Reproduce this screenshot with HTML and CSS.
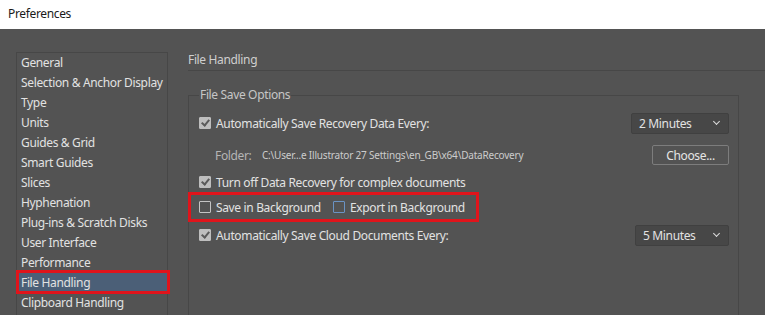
FILE: index.html
```html
<!DOCTYPE html>
<html lang="en">
<head>
    <meta charset="UTF-8">
    <meta name="viewport" content="width=device-width, initial-scale=1.0">
    <title>Preferences</title>
    <link rel="stylesheet" href="styles.css">
</head>
<body>
<div class="titleBar">Preferences</div>
<div class="main">
    <ul class="sideList">
        <li>General</li>
        <li>Selection &amp; Anchor Display</li>
        <li>Type</li>
        <li>Units</li>
        <li>Guides &amp; Grid</li>
        <li>Smart Guides</li>
        <li>Slices</li>
        <li>Hyphenation</li>
        <li>Plug-ins &amp; Scratch Disks</li>
        <li>User Interface</li>
        <li>Performance</li>
        <li class="selected">File Handling</li>
        <li>Clipboard Handling</li>
    </ul>
    <div class="content">
        <div class="pageTitle">File Handling</div>
        <fieldset class="group">
            <legend>File Save Options</legend>
            <div class="row rowFirst">
                <span class="check checked"></span>
                <span class="label">Automatically Save Recovery Data Every:</span>
                <div class="dropdown wide">2 Minutes<span class="chevron"></span></div>
            </div>
            <div class="row rowFolder">
                <span class="folderLabel">Folder:</span>
                <span class="path">C:\User...e Illustrator 27 Settings\en_GB\x64\DataRecovery</span>
                <button class="chooseButton">Choose...</button>
            </div>
            <div class="row rowThird">
                <span class="check checked"></span>
                <span class="label">Turn off Data Recovery for complex documents</span>
            </div>
            <div class="highlight">
                <span class="check"></span>
                <span class="label">Save in Background</span>
                <span class="check focused"></span>
                <span class="label">Export in Background</span>
            </div>
            <div class="row rowLast">
                <span class="check checked"></span>
                <span class="label">Automatically Save Cloud Documents Every:</span>
                <div class="dropdown">5 Minutes<span class="chevron"></span></div>
            </div>
        </fieldset>
    </div>
</div>
</body>
</html>
```

FILE: styles.css
```css
body {
    margin: 0;
    width: 765px;
    height: 315px;
    overflow: hidden;
    background-color: #535353;
    font-family: 'Noto Sans', 'Liberation Sans', sans-serif;
    font-size: 12px;
    letter-spacing: -0.35px;
    color: #e2e2e2;
}
.titleBar {
    height: 29px;
    line-height: 28px;
    padding-left: 8px;
    background-color: #ffffff;
    color: #1a1a1a;
}
.main {
    display: flex;
    height: 286px;
    box-sizing: border-box;
    overflow: hidden;
    padding: 23px 0 0 16px;
    gap: 20px;
}
.sideList {
    list-style: none;
    margin: 0;
    padding: 0 0 0 2px;
    width: 148px;
    border: 1px solid #474747;
    border-bottom: none;
}
.sideList li {
    height: 20px;
    line-height: 20px;
    padding-left: 2px;
    white-space: nowrap;
}
.sideList .selected {
    position: relative;
    background-color: #4b5f77;
}
.sideList .selected::after {
    content: '';
    position: absolute;
    left: -3px;
    right: -3px;
    top: -3px;
    bottom: -1px;
    border: 3px solid #e0141b;
}
.content {
    flex: 1;
    display: flex;
    flex-direction: column;
}
.pageTitle {
    color: #cfcfcf;
    line-height: 16px;
    padding-bottom: 2px;
    border-bottom: 1px solid #474747;
}
.group {
    flex: 1;
    margin: 16px 26px 0 0;
    padding: 0 9px 0 10px;
    border: 1px solid #474747;
    border-bottom: none;
}
.group legend {
    padding: 0 1px;
    line-height: 16px;
    color: #c6c6c6;
}
.row {
    display: flex;
    align-items: center;
}
.rowFirst {
    height: 22px;
    margin-top: 9px;
}
.rowFolder {
    height: 20px;
    margin-top: 11px;
}
.rowThird {
    height: 20px;
    margin-top: 7px;
}
.rowLast {
    height: 22px;
    margin-top: 2px;
}
.check {
    box-sizing: border-box;
    width: 12px;
    height: 12px;
    margin-right: 5px;
    border: 1px solid #c4c4c4;
    border-radius: 1px;
    flex-shrink: 0;
}
.checked {
    background-color: #bebebe;
    border-color: #bebebe;
    position: relative;
}
.checked::after {
    content: '';
    position: absolute;
    left: 3px;
    top: 0px;
    width: 3px;
    height: 6px;
    border: solid #5a5a5a;
    border-width: 0 2px 2px 0;
    transform: rotate(40deg);
}
.focused {
    border-color: #6a93c4;
    margin-left: 12px;
}
.label {
    white-space: nowrap;
}
.dropdown {
    box-sizing: border-box;
    margin-left: auto;
    width: 94px;
    height: 21px;
    line-height: 19px;
    padding-left: 7px;
    background-color: #474747;
    border: 1px solid #404040;
    border-radius: 2px;
    position: relative;
}
.dropdown.wide {
    width: 98px;
}
.chevron {
    position: absolute;
    right: 9px;
    top: 5px;
    width: 4px;
    height: 4px;
    border: solid #dcdcdc;
    border-width: 0 1.5px 1.5px 0;
    transform: rotate(45deg);
}
.folderLabel {
    color: #b5b5b5;
    margin-left: 16px;
    width: 47px;
}
.path {
    font-size: 10px;
    letter-spacing: -0.2px;
    color: #cccccc;
    white-space: nowrap;
}
.chooseButton {
    box-sizing: border-box;
    margin-left: auto;
    width: 77px;
    height: 20px;
    padding: 0;
    font-family: inherit;
    font-size: 12px;
    letter-spacing: inherit;
    color: #e6e6e6;
    background-color: #535353;
    border: 1px solid #7d7d7d;
    border-radius: 2px;
}
.highlight {
    display: flex;
    align-items: center;
    width: fit-content;
    height: 24px;
    margin-left: -11px;
    padding: 0 11px 0 8px;
    border: 3px solid #e0141b;
}
```
